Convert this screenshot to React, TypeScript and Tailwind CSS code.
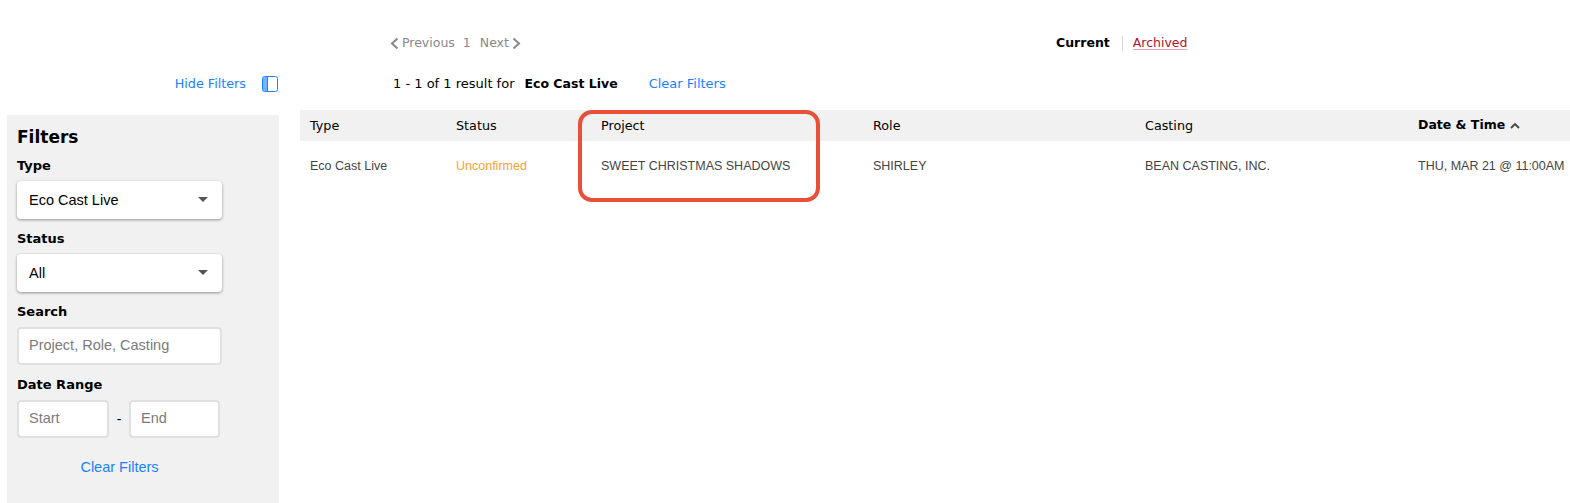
import React from 'react';

const verdana = "font-['DejaVu_Sans',Verdana,sans-serif]";

const FilterLabel = ({ children }: { children: React.ReactNode }) => (
  <div className="text-[13px] leading-[16px] font-bold text-black font-['DejaVu_Sans',sans-serif]">{children}</div>
);

const FakeSelect = ({ value }: { value: string }) => (
  <div className="mt-[7px] w-[205px] h-[38px] bg-white rounded-[4px] shadow-[0_1px_3px_rgba(0,0,0,0.4)] flex items-center justify-between pl-[12px] pr-[14px]">
    <span className="text-[14.5px] text-black pt-[2px]">{value}</span>
    <span className="w-0 h-0 border-x-[5px] border-x-transparent border-t-[5px] border-t-[#555] -mt-[2px]" />
  </div>
);

const FakeInput = ({ placeholder, width }: { placeholder: string; width: string }) => (
  <div className={`${width} h-[38px] bg-white rounded-[4px] border-2 border-[#e0e0e0] flex items-center pl-[10px] text-[14.5px] text-[#7b7b7b]`}>
    {placeholder}
  </div>
);

const columns = [
  { label: 'Type', value: 'Eco Cast Live', width: 'w-[146px]' },
  { label: 'Status', value: 'Unconfirmed', width: 'w-[145px]', valueClass: 'text-[#f9a330]' },
  { label: 'Project', value: 'SWEET CHRISTMAS SHADOWS', width: 'w-[272px]' },
  { label: 'Role', value: 'SHIRLEY', width: 'w-[272px]' },
  { label: 'Casting', value: 'BEAN CASTING, INC.', width: 'w-[273px]' },
];

export default function App() {
  return (
    <div className="h-[503px] w-[1570px] overflow-hidden bg-white flex font-['Liberation_Sans',Arial,sans-serif]">
      {/* Left column */}
      <aside className="w-[272px] shrink-0 ml-[7px] flex flex-col">
        <div className="mt-[76px] h-[16px] flex items-center justify-end gap-[16px]">
          <span className={`text-[12.75px] text-[#1a82ff] ${verdana}`}>Hide Filters</span>
          <svg width="16" height="16" viewBox="0 0 16 16" className="text-[#1a82ff] mr-px">
            <rect x="0.5" y="0.5" width="15" height="15" rx="2" fill="none" stroke="currentColor" />
            <path d="M1 2.5a1.5 1.5 0 0 1 1.500-1.500H5v14H2.500A1.500 1.500 0 0 1 1 13.500z" fill="currentColor" opacity="0.6" />
            <path d="M5.500 1v14" stroke="currentColor" fill="none" />
          </svg>
        </div>

        <div className="mt-[23px] flex-1 bg-[#f1f1f1] pl-[10px] pt-[12px]">
          <div className="text-[17px] leading-[20px] font-bold text-black font-['DejaVu_Sans',sans-serif]">Filters</div>
          <div className="mt-[11px]">
            <FilterLabel>Type</FilterLabel>
            <FakeSelect value="Eco Cast Live" />
          </div>
          <div className="mt-[12px]">
            <FilterLabel>Status</FilterLabel>
            <FakeSelect value="All" />
          </div>
          <div className="mt-[12px]">
            <FilterLabel>Search</FilterLabel>
            <div className="mt-[7px]">
              <FakeInput placeholder="Project, Role, Casting" width="w-[205px]" />
            </div>
          </div>
          <div className="mt-[12px]">
            <FilterLabel>Date Range</FilterLabel>
            <div className="mt-[7px] flex items-center">
              <FakeInput placeholder="Start" width="w-[92px]" />
              <span className="w-[20px] text-center text-[14px] text-black">-</span>
              <FakeInput placeholder="End" width="w-[91px]" />
            </div>
          </div>
          <div className="mt-[20px] w-[205px] text-center text-[14.5px] leading-[18px] text-[#1a82ff]">Clear Filters</div>
        </div>
      </aside>

      {/* Right column */}
      <main className="flex-1 ml-[21px] min-w-0 flex flex-col">
        <div className="mt-[35px] h-[16px] flex items-center">
          <div className={`ml-[90px] w-[666px] flex items-center text-[12.5px] text-[#888] ${verdana}`}>
            <svg width="9" height="13" viewBox="0 0 9 13" fill="none" stroke="#888" strokeWidth="2">
              <path d="M7.500 1.500L2 6.500l5.500 5" />
            </svg>
            <span className="ml-[3px]">Previous</span>
            <span className="ml-[8px]">1</span>
            <span className="ml-[9px]">Next</span>
            <svg width="9" height="13" viewBox="0 0 9 13" fill="none" stroke="#888" strokeWidth="2" className="ml-[3px]">
              <path d="M1.500 1.500L7 6.500l-5.500 5" />
            </svg>
          </div>
          <div className={`flex items-center text-[12.5px] ${verdana}`}>
            <span className="font-bold text-black">Current</span>
            <span className="ml-[12px] w-px h-[15px] bg-[#d5d5d5]" />
            <span className="ml-[10px] text-[#b0122b] underline decoration-[#e8a9b4] underline-offset-2">Archived</span>
          </div>
        </div>

        <div className={`mt-[25px] h-[16px] ml-[93px] flex items-center text-[13px] text-black ${verdana}`}>
          <span>1 - 1 of 1 result for</span>
          <span className="ml-[10px] font-bold text-[12.5px]">Eco Cast Live</span>
          <span className="ml-[31px] text-[#1a82ff]">Clear Filters</span>
        </div>

        <div className="relative mt-[18px]">
          <div className={`h-[31px] bg-[#f1f1f1] flex items-center pl-[10px] text-[12.75px] text-black ${verdana}`}>
            {columns.map((c) => (
              <div key={c.label} className={c.width}>{c.label}</div>
            ))}
            <div className="flex items-center gap-[5px] font-bold text-[12.5px]">
              Date &amp; Time
              <svg width="10" height="6" viewBox="0 0 10 6" fill="none" stroke="#444" strokeWidth="1.800">
                <path d="M1 5l4-4 4 4" />
              </svg>
            </div>
          </div>
          <div className="h-[48px] pt-[2px] flex items-center pl-[10px] text-[12.5px] text-[#444]">
            {columns.map((c) => (
              <div key={c.label} className={`${c.width} ${c.valueClass ?? ''}`}>{c.value}</div>
            ))}
            <div className="whitespace-nowrap">THU, MAR 21 @ 11:00AM</div>
          </div>

          {/* Red highlight drawn over the Project column */}
          <div className="absolute left-[278px] top-0 w-[242px] h-[92px] border-[4px] border-[#e8503a] rounded-[14px]" />
        </div>
      </main>
    </div>
  );
}
